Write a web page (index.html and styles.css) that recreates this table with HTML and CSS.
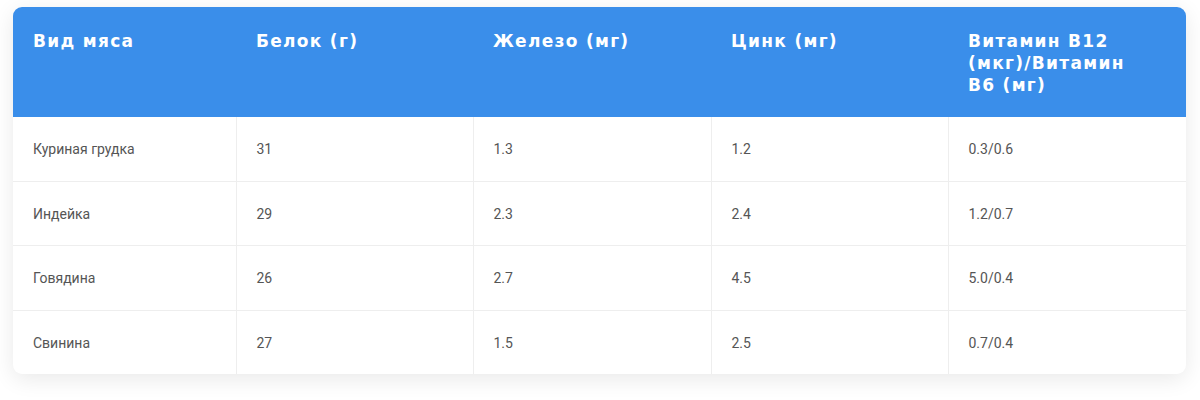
FILE: index.html
```html
<!DOCTYPE html>
<html lang="ru">
<head>
<meta charset="utf-8">
<link rel="stylesheet" href="styles.css">
</head>
<body>
<div class="card">
  <table class="tbl">
    <colgroup>
      <col class="c1"><col class="c2"><col class="c3"><col class="c4"><col class="c5">
    </colgroup>
    <thead>
      <tr>
        <th>Вид мяса</th>
        <th>Белок (г)</th>
        <th>Железо (мг)</th>
        <th>Цинк (мг)</th>
        <th>Витамин B12 (мкг)/Витамин B6&nbsp;(мг)</th>
      </tr>
    </thead>
    <tbody>
      <tr><td>Куриная грудка</td><td>31</td><td>1.3</td><td>1.2</td><td>0.3/0.6</td></tr>
      <tr><td>Индейка</td><td>29</td><td>2.3</td><td>2.4</td><td>1.2/0.7</td></tr>
      <tr><td>Говядина</td><td>26</td><td>2.7</td><td>4.5</td><td>5.0/0.4</td></tr>
      <tr><td>Свинина</td><td>27</td><td>1.5</td><td>2.5</td><td>0.7/0.4</td></tr>
    </tbody>
  </table>
</div>
</body>
</html>
```
FILE: styles.css
```css
html, body {
  margin: 0;
  padding: 0;
  background: #ffffff;
  min-height: 400px;
}
body {
  padding: 7px 14px 0 13px;
  box-sizing: border-box;
}
.card {
  width: 1173px;
  border-radius: 9px;
  background: #fff;
  box-shadow: 0 5px 22px rgba(0, 0, 0, 0.09);
  overflow: hidden;
}
.tbl {
  width: 100%;
  border-collapse: collapse;
  table-layout: fixed;
}
.c1 { width: 223px; }
.c2 { width: 237px; }
.c3 { width: 238px; }
.c4 { width: 237px; }
.c5 { width: 238px; }
.tbl th {
  background: #3a8eea;
  color: #fff;
  font-family: "DejaVu Sans", sans-serif;
  font-weight: bold;
  font-size: 17px;
  line-height: 22px;
  letter-spacing: 1.3px;
  text-align: left;
  vertical-align: top;
  padding: 23px 20px 21px 20px;
  height: 66px;
}
.tbl td {
  font-family: Roboto, "Liberation Sans", sans-serif;
  font-size: 14px;
  line-height: 20px;
  color: #555;
  padding: 22px 20px 21.5px 20px;
  border-top: 1px solid #eeeeee;
  border-left: 1px solid #eeeeee;
}
.tbl tbody tr:first-child td {
  border-top: none;
}
.tbl td:first-child {
  border-left: none;
}
```
